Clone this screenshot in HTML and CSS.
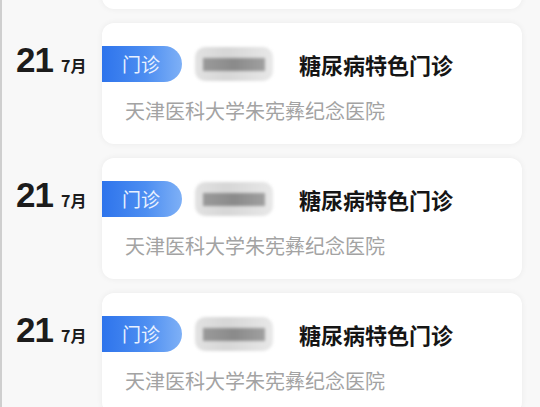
FILE: index.html
```html
<!DOCTYPE html>
<html lang="zh-CN">
<head>
  <meta charset="UTF-8">
  <meta name="viewport" content="width=device-width, initial-scale=1.0">
  <title>就诊记录</title>
  <link rel="stylesheet" href="styles.css">
</head>
<body>
  <div class="list">
    <div class="row">
      <div class="date"></div>
      <div class="card"></div>
    </div>

    <div class="row">
      <div class="date"><span class="day">21</span><span class="month">7月</span></div>
      <div class="card">
        <div class="card-head">
          <span class="badge">门诊</span>
          <span class="masked"><span class="masked-bar"></span></span>
          <span class="dept">糖尿病特色门诊</span>
        </div>
        <div class="hospital">天津医科大学朱宪彝纪念医院</div>
      </div>
    </div>

    <div class="row">
      <div class="date"><span class="day">21</span><span class="month">7月</span></div>
      <div class="card">
        <div class="card-head">
          <span class="badge">门诊</span>
          <span class="masked"><span class="masked-bar"></span></span>
          <span class="dept">糖尿病特色门诊</span>
        </div>
        <div class="hospital">天津医科大学朱宪彝纪念医院</div>
      </div>
    </div>

    <div class="row">
      <div class="date"><span class="day">21</span><span class="month">7月</span></div>
      <div class="card">
        <div class="card-head">
          <span class="badge">门诊</span>
          <span class="masked"><span class="masked-bar"></span></span>
          <span class="dept">糖尿病特色门诊</span>
        </div>
        <div class="hospital">天津医科大学朱宪彝纪念医院</div>
      </div>
    </div>
  </div>
</body>
</html>
```

FILE: styles.css
```css
body {
  margin: 0;
  height: 407px;
  overflow: hidden;
  background-color: #f8f8f8;
  border-left: 2px solid #cfcfcf;
  font-family: "Liberation Sans", "Noto Sans CJK SC", sans-serif;
}
.list {
  margin-top: -112px;
  display: flex;
  flex-direction: column;
  gap: 14px;
}
.row {
  display: flex;
  align-items: flex-start;
}
.date {
  width: 100px;
  padding-left: 14px;
  padding-top: 20px;
  box-sizing: border-box;
  display: flex;
  align-items: baseline;
  color: #1c1c1c;
  font-weight: 700;
}
.day {
  font-size: 35px;
  line-height: 34px;
  letter-spacing: -1px;
}
.month {
  font-family: "Noto Sans CJK SC", sans-serif;
  font-size: 16px;
  margin-left: 8px;
}
.card {
  flex: 1;
  height: 121px;
  margin-right: 18px;
  box-sizing: border-box;
  padding-top: 23px;
  background-color: #fff;
  border-radius: 12px;
  box-shadow: 0 0 6px rgba(0, 0, 0, 0.06);
  overflow: hidden;
}
.card-head {
  display: flex;
  align-items: center;
  height: 36px;
}
.badge {
  width: 80px;
  height: 36px;
  box-sizing: border-box;
  padding-left: 20px;
  line-height: 36px;
  border-radius: 0 18px 18px 0;
  background: linear-gradient(90deg, #2e74ec 0%, #4d8ef1 55%, #7eb0f6 100%);
  color: #e9f1ff;
  font-family: "Noto Sans CJK SC", sans-serif;
  font-size: 19px;
}
.masked {
  width: 78px;
  height: 34px;
  margin-left: 13px;
  display: flex;
  align-items: center;
  background: linear-gradient(90deg, #e2e2e2 0%, #d6d6d6 40%, #e8e8e8 100%);
  border-radius: 10px;
  filter: blur(1.5px);
}
.masked-bar {
  display: block;
  width: 62px;
  height: 13px;
  margin-left: 8px;
  background: linear-gradient(90deg, #9a9a9a 0%, #8a8a8a 50%, #a0a0a0 100%);
}
.dept {
  margin-left: 26px;
  color: #151515;
  font-family: "Noto Sans CJK SC", sans-serif;
  font-size: 22px;
  font-weight: 700;
}
.hospital {
  margin-top: 17px;
  padding-left: 23px;
  color: #a3a3a3;
  font-family: "Noto Sans CJK SC", sans-serif;
  font-size: 20px;
  line-height: 24px;
}
```
